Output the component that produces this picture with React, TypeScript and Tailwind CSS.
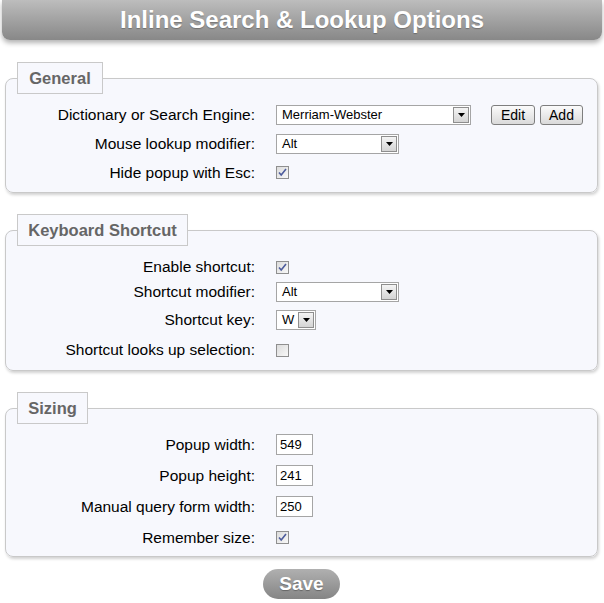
import type { ReactNode } from "react";

const font = "font-['Liberation_Sans',Arial,sans-serif]";

const Arrow = () => (
  <span className="flex h-[16px] w-[16px] items-center justify-center border border-[#8e8e8e] bg-gradient-to-b from-[#f4f4f4] to-[#d4d4d4]">
    <svg width="7" height="4" viewBox="0 0 7 4">
      <path d="M0 0h7L3.5 4z" fill="#000" />
    </svg>
  </span>
);

const Select = ({ value, width }: { value: string; width: string }) => (
  <div
    className={`flex h-[20px] items-center justify-between border border-[#a5a5a5] bg-white pl-[5px] pr-[1px] text-[13px] text-black ${width}`}
  >
    <span>{value}</span>
    <Arrow />
  </div>
);

const Checkbox = ({ checked }: { checked?: boolean }) => (
  <span className="flex h-[13px] w-[13px] items-center justify-center border border-[#8f8f8f] bg-gradient-to-br from-[#dcdcdc] to-[#f8f8f8]">
    {checked && (
      <svg width="9" height="9" viewBox="0 0 9 9">
        <path d="M1 4.5l2.2 2.6L8 1" fill="none" stroke="#4d5c9c" strokeWidth="1.6" />
      </svg>
    )}
  </span>
);

const TextBox = ({ value }: { value: string }) => (
  <div className="flex h-[21px] w-[37px] items-center border border-[#a5a5a5] bg-white pl-[3px] text-[13px] text-black">
    {value}
  </div>
);

const Button = ({ label, width }: { label: string; width: string }) => (
  <button
    className={`h-[20px] rounded-[3px] border border-[#7e7e7e] bg-gradient-to-b from-[#fbfbfb] to-[#dadada] text-[14px] leading-none text-black ${width}`}
  >
    {label}
  </button>
);

const Row = ({ label, h, children }: { label: string; h: string; children: ReactNode }) => (
  <div className={`flex items-center ${h}`}>
    <span className="w-[250px] pr-[1px] text-right text-[15.5px] text-black">{label}</span>
    <div className="ml-[20px] flex items-center">{children}</div>
  </div>
);

const Section = ({
  title,
  legendWidth,
  pad,
  children,
}: {
  title: string;
  legendWidth: string;
  pad: string;
  children: ReactNode;
}) => (
  <fieldset
    className={`ml-[5px] mr-[6px] rounded-[8px] border border-[#c9c9c9] bg-[#f7f8fd] shadow-[1px_2px_3px_rgba(0,0,0,0.18)] ${pad}`}
  >
    <legend
      className={`ml-[11px] flex h-[32px] items-center justify-center border border-[#c9c9c9] bg-[#f7f8fd] text-[16.5px] font-bold text-[#666] ${legendWidth}`}
    >
      {title}
    </legend>
    {children}
  </fieldset>
);

export default function App() {
  return (
    <div className={`min-h-[603px] w-[604px] bg-white ${font}`}>
      <div className="mx-[2px] flex h-[40px] items-center justify-center rounded-b-[8px] bg-gradient-to-b from-[#bdbdbd] to-[#888] shadow-[0_3px_5px_rgba(0,0,0,0.3)]">
        <h1 className="text-[24px] font-bold text-white [text-shadow:0_1px_1px_rgba(0,0,0,0.25)]">
          Inline Search &amp; Lookup Options
        </h1>
      </div>

      <div className="mt-[22px] flex flex-col gap-[21px]">
        <Section title="General" legendWidth="w-[86px]" pad="pt-[6px] pb-[5px]">
          <Row label="Dictionary or Search Engine:" h="h-[29px]">
            <Select value="Merriam-Webster" width="w-[195px]" />
            <div className="ml-[20px] flex gap-[5px]">
              <Button label="Edit" width="w-[44px]" />
              <Button label="Add" width="w-[43px]" />
            </div>
          </Row>
          <Row label="Mouse lookup modifier:" h="h-[29px]">
            <Select value="Alt" width="w-[123px]" />
          </Row>
          <Row label="Hide popup with Esc:" h="h-[29px]">
            <Checkbox checked />
          </Row>
        </Section>

        <Section title="Keyboard Shortcut" legendWidth="w-[171px]" pad="pt-[9px] pb-[5px]">
          <Row label="Enable shortcut:" h="h-[24px]">
            <Checkbox checked />
          </Row>
          <Row label="Shortcut modifier:" h="h-[26px]">
            <Select value="Alt" width="w-[123px]" />
          </Row>
          <Row label="Shortcut key:" h="h-[30px]">
            <Select value="W" width="w-[40px]" />
          </Row>
          <Row label="Shortcut looks up selection:" h="h-[30px]">
            <Checkbox />
          </Row>
        </Section>

        <Section title="Sizing" legendWidth="w-[71px]" pad="pt-[5px] pb-[3px]">
          <Row label="Popup width:" h="h-[31px]">
            <TextBox value="549" />
          </Row>
          <Row label="Popup height:" h="h-[31px]">
            <TextBox value="241" />
          </Row>
          <Row label="Manual query form width:" h="h-[31px]">
            <TextBox value="250" />
          </Row>
          <Row label="Remember size:" h="h-[31px]">
            <Checkbox checked />
          </Row>
        </Section>
      </div>

      <div className="mt-[12px] flex justify-center pr-[1px]">
        <button className="h-[30px] w-[77px] rounded-full bg-gradient-to-b from-[#b0b0b0] to-[#858585] text-[19px] font-bold text-white [text-shadow:0_1px_1px_rgba(0,0,0,0.3)]">
          Save
        </button>
      </div>
    </div>
  );
}
